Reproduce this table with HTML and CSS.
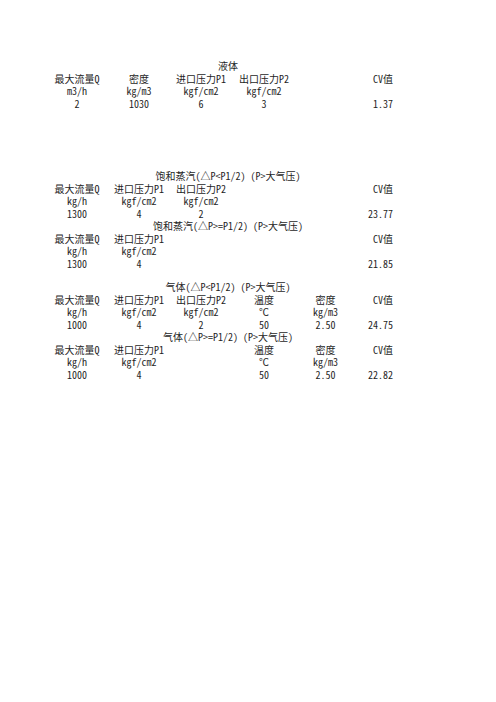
FILE: index.html
```html
<!DOCTYPE html>
<html lang="zh-CN">
<head>
<meta charset="utf-8">
<link rel="stylesheet" href="styles.css">
</head>
<body>
<div class="page">
  <section class="block block-liquid">
    <div class="title">液体</div>
    <div class="grid">
      <span>最大流量Q</span><span>密度</span><span>进口压力P1</span><span>出口压力P2</span><span></span><span class="cv">CV值</span>
      <span>m3/h</span><span>kg/m3</span><span>kgf/cm2</span><span>kgf/cm2</span><span></span><span class="cv"></span>
      <span>2</span><span>1030</span><span>6</span><span>3</span><span></span><span class="cv">1.37</span>
    </div>
  </section>

  <section class="group group-steam">
    <div class="block">
      <div class="title">饱和蒸汽(△P&lt;P1/2) (P&gt;大气压)</div>
      <div class="grid">
        <span>最大流量Q</span><span>进口压力P1</span><span>出口压力P2</span><span></span><span></span><span class="cv">CV值</span>
        <span>kg/h</span><span>kgf/cm2</span><span>kgf/cm2</span><span></span><span></span><span class="cv"></span>
        <span>1300</span><span>4</span><span>2</span><span></span><span></span><span class="cv">23.77</span>
      </div>
    </div>
    <div class="block">
      <div class="title">饱和蒸汽(△P&gt;=P1/2) (P&gt;大气压)</div>
      <div class="grid">
        <span>最大流量Q</span><span>进口压力P1</span><span></span><span></span><span></span><span class="cv">CV值</span>
        <span>kg/h</span><span>kgf/cm2</span><span></span><span></span><span></span><span class="cv"></span>
        <span>1300</span><span>4</span><span></span><span></span><span></span><span class="cv">21.85</span>
      </div>
    </div>
  </section>

  <section class="group group-gas">
    <div class="block">
      <div class="title">气体(△P&lt;P1/2) (P&gt;大气压)</div>
      <div class="grid">
        <span>最大流量Q</span><span>进口压力P1</span><span>出口压力P2</span><span>温度</span><span>密度</span><span class="cv">CV值</span>
        <span>kg/h</span><span>kgf/cm2</span><span>kgf/cm2</span><span>℃</span><span>kg/m3</span><span class="cv"></span>
        <span>1000</span><span>4</span><span>2</span><span>50</span><span>2.50</span><span class="cv">24.75</span>
      </div>
    </div>
    <div class="block">
      <div class="title">气体(△P&gt;=P1/2) (P&gt;大气压)</div>
      <div class="grid">
        <span>最大流量Q</span><span>进口压力P1</span><span></span><span>温度</span><span>密度</span><span class="cv">CV值</span>
        <span>kg/h</span><span>kgf/cm2</span><span></span><span>℃</span><span>kg/m3</span><span class="cv"></span>
        <span>1000</span><span>4</span><span></span><span>50</span><span>2.50</span><span class="cv">22.82</span>
      </div>
    </div>
  </section>
</div>
</body>
</html>
```

FILE: styles.css
```css
html, body {
  margin: 0;
  padding: 0;
  background: #ffffff;
}

body {
  font-family: "Noto Sans Mono CJK SC", "Noto Sans CJK SC", "Liberation Mono", monospace;
  font-size: 10px;
  color: #1e1e1e;
}

.page {
  width: 364px;
  margin-left: 46px;
  padding-top: 60px;
}

.title,
.grid span {
  height: 12.5px;
  line-height: 12.5px;
  white-space: nowrap;
}

.title {
  text-align: center;
}

.grid {
  display: grid;
  grid-template-columns: 62px 62px 62px 64px 59px 55px;
  grid-auto-rows: 12.5px;
}

.grid span {
  text-align: center;
}

.grid .cv {
  text-align: right;
  padding-right: 17px;
}

.group-steam {
  margin-top: 60px;
}

.group-gas {
  margin-top: 11px;
}
```
